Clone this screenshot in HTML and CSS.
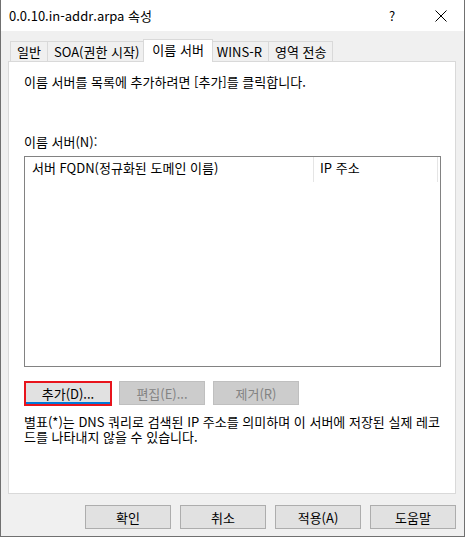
FILE: index.html
```html
<!DOCTYPE html>
<html lang="ko">
<head>
    <meta charset="UTF-8">
    <title>0.0.10.in-addr.arpa 속성</title>
    <link rel="stylesheet" href="styles.css">
</head>
<body>
    <div class="window">
        <div class="titlebar">
            <span class="title">0.0.10.in-addr.arpa 속성</span>
            <span class="help">?</span>
            <span class="close">
                <svg width="12" height="12" viewBox="0 0 12 12">
                    <path d="M0.5 0.5 L11.5 11.5 M11.5 0.5 L0.5 11.5" stroke="#000" stroke-width="1" fill="none"/>
                </svg>
            </span>
        </div>
        <div class="client">
            <div class="tabs">
                <div class="tab">일반</div>
                <div class="tab">SOA(권한 시작)</div>
                <div class="tab active">이름 서버</div>
                <div class="tab">WINS-R</div>
                <div class="tab">영역 전송</div>
            </div>
            <div class="panel">
                <p class="intro">이름 서버를 목록에 추가하려면 [추가]를 클릭합니다.</p>
                <p class="label">이름 서버(N):</p>
                <div class="listview">
                    <div class="list-header">
                        <div class="col col-name">서버 FQDN(정규화된 도메인 이름)</div>
                        <div class="col col-ip">IP 주소</div>
                    </div>
                </div>
                <div class="list-buttons">
                    <button type="button" class="btn btn-focus">추가(D)...</button>
                    <button type="button" class="btn" disabled>편집(E)...</button>
                    <button type="button" class="btn btn-remove" disabled>제거(R)</button>
                </div>
                <p class="note">별표(*)는 DNS 쿼리로 검색된 IP 주소를 의미하며 이 서버에 저장된 실제 레코<br>드를 나타내지 않을 수 있습니다.</p>
            </div>
            <div class="footer">
                <button type="button" class="btn">확인</button>
                <button type="button" class="btn">취소</button>
                <button type="button" class="btn">적용(A)</button>
                <button type="button" class="btn">도움말</button>
            </div>
        </div>
    </div>
</body>
</html>
```

FILE: styles.css
```css
/* 대화 상자 전체 */
body {
    margin: 0;
    font-family: "Noto Sans CJK KR", "Noto Sans", sans-serif;
    font-size: 13px;
    color: #000;
}
p {
    margin: 0;
}
.window {
    width: 465px;
    height: 537px;
    box-sizing: border-box;
    border: 1px solid #707070;
    border-top: none;
    display: flex;
    flex-direction: column;
    background-color: #f0f0f0;
}

/* 제목 표시줄 */
.titlebar {
    height: 31px;
    flex-shrink: 0;
    background-color: #fff;
    display: flex;
    align-items: center;
    padding-left: 8px;
}
.title {
    flex: 1;
    line-height: 16px;
}
.help {
    width: 14px;
    margin-right: 32px;
    font-size: 13px;
}
.close {
    width: 12px;
    height: 12px;
    margin-right: 17px;
    display: flex;
}

/* 본문 */
.client {
    flex: 1;
    display: flex;
    flex-direction: column;
    padding: 8px 8px 0 7px;
}

/* 탭 */
.tabs {
    height: 22px;
    display: flex;
    align-items: flex-end;
    padding-left: 2px;
}
.tab {
    height: 19px;
    line-height: 19px;
    padding: 0 6px;
    border: 1px solid #d9d9d9;
    border-bottom: none;
    margin-left: -1px;
    white-space: nowrap;
}
.tab:first-child {
    margin-left: 0;
}
.tab.active {
    height: 22px;
    line-height: 20px;
    margin: 0 -2px -1px -3px;
    padding: 0 8px;
    background-color: #fff;
    position: relative; /* 패널 테두리 위에 겹치기 */
    z-index: 1;
}

/* 탭 내용 */
.panel {
    height: 433px;
    box-sizing: border-box;
    border: 1px solid #d9d9d9;
    background-color: #fff;
    padding: 12px 14px 0 15px;
    line-height: 16px;
}
.label {
    margin-top: 44px;
}
.listview {
    width: 417px;
    height: 211px;
    box-sizing: border-box;
    margin-top: 6px;
    border: 1px solid #828282;
}
.list-header {
    display: flex;
    height: 25px;
}
.col {
    line-height: 21px;
    border-right: 1px solid #e5e5e5;
    white-space: nowrap;
}
.col-name {
    width: 281px;
    padding-left: 7px;
}
.col-ip {
    width: 117px;
    padding-left: 6px;
}

/* 버튼 */
.btn {
    font-family: inherit;
    font-size: 13px;
    color: #000;
    width: 86px;
    height: 24px;
    padding: 0;
    background-color: #e1e1e1;
    border: 1px solid #adadad;
}
.btn:disabled {
    color: #838383;
    background-color: #cccccc;
    border-color: #bfbfbf;
}
.btn-focus {
    width: 88px;
    height: 25px;
    border: 2px solid #e8141c;
    box-shadow: inset 0 -2px 0 #0078d7;
}
.list-buttons {
    display: flex;
    align-items: flex-start;
    gap: 7px;
    margin-top: 14px;
}
.btn-remove {
    margin-left: 1px;
}
.note {
    margin-top: 8px;
    line-height: 15px;
}

/* 하단 버튼 */
.footer {
    display: flex;
    justify-content: flex-end;
    gap: 9px;
    margin-top: 11px;
}
```
